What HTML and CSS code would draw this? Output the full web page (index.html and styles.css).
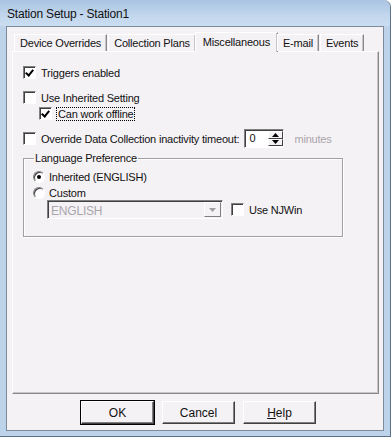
FILE: index.html
```html
<!DOCTYPE html>
<html lang="en">
<head>
  <meta charset="UTF-8" />
  <title>Station Setup - Station1</title>
  <link rel="stylesheet" href="styles.css">
</head>
<body>
  <div class="window">
    <div class="title-bar">Station Setup - Station1</div>
    <div class="client">
      <div class="tabs">
        <div class="tab">Device Overrides</div>
        <div class="tab">Collection Plans</div>
        <div class="tab active">Miscellaneous</div>
        <div class="tab">E-mail</div>
        <div class="tab">Events</div>
      </div>
      <div class="panel">
        <label class="check row-triggers"><span class="box checked"></span>Triggers enabled</label>
        <label class="check row-inherit"><span class="box"></span>Use Inherited Setting</label>
        <label class="check row-offline"><span class="box checked"></span><span class="focus">Can work offline</span></label>
        <div class="timeout-row">
          <label class="check"><span class="box"></span>Override Data Collection inactivity timeout:</label>
          <div class="spinner">
            <span class="spin-value">0</span>
            <span class="spin-buttons">
              <span class="spin-btn"><svg width="7" height="4" viewBox="0 0 7 4"><path d="M3.5 0L7 4H0z" fill="#000"/></svg></span>
              <span class="spin-btn"><svg width="7" height="4" viewBox="0 0 7 4"><path d="M0 0H7L3.5 4z" fill="#000"/></svg></span>
            </span>
          </div>
          <span class="disabled-text">minutes</span>
        </div>
        <fieldset class="group">
          <legend>Language Preference</legend>
          <label class="radio"><span class="dot checked"></span>Inherited (ENGLISH)</label>
          <label class="radio"><span class="dot"></span>Custom</label>
          <div class="combo-row">
            <div class="combo">
              <span class="combo-value">ENGLISH</span>
              <span class="combo-btn"><svg width="7" height="4" viewBox="0 0 7 4"><path d="M0 0H7L3.5 4z" fill="#a0a0a0"/></svg></span>
            </div>
            <label class="check"><span class="box"></span>Use NJWin</label>
          </div>
        </fieldset>
      </div>
      <div class="buttons">
        <button class="btn default">OK</button>
        <button class="btn">Cancel</button>
        <button class="btn"><u>H</u>elp</button>
      </div>
    </div>
  </div>
</body>
</html>
```

FILE: styles.css
```css
body {
  margin: 0;
  padding: 0;
  font-family: "Liberation Sans", Arial, sans-serif;
  font-size: 11px;
  letter-spacing: -0.2px;
  color: #111;
  background: #fff;
}

.window {
  width: 391px;
  height: 437px;
  box-sizing: border-box;
  background: #bcd3ea;
  border: 1px solid #5d7189;
  border-top: none;
  border-left: none;
  border-radius: 0 7px 0 0;
  display: flex;
  flex-direction: column;
  padding: 0 6px 5px 6px;
}

.title-bar {
  height: 26px;
  margin: 0 -6px;
  padding-left: 7px;
  box-sizing: border-box;
  display: flex;
  align-items: center;
  font-size: 12px;
  padding-top: 2px;
  background: linear-gradient(to bottom, #a9c3e1, #c2d7ee 60%, #cadcf0);
  border-radius: 0 7px 0 0;
}

.client {
  flex: 1;
  background: #f5f2f6;
  border: 1px solid #7d8a9a;
  display: flex;
  flex-direction: column;
  padding: 6px 4px 0 5px;
}

.tabs {
  display: flex;
  height: 18px;
  padding-left: 2px;
  align-items: flex-end;
  position: relative;
  z-index: 1;
}

.tab {
  height: 17px;
  box-sizing: border-box;
  padding: 1px 5px 0 5px;
  border: 1px solid #fff;
  border-right-color: #888;
  border-bottom: none;
  margin-right: 1px;
  background: #f5f2f6;
  box-shadow: inset -1px 0 #c8c4c8;
  line-height: 15px;
}

.tab.active {
  height: 20px;
  margin: 0 -1px -1px -2px;
  padding: 1px 7px 0 7px;
  line-height: 16px;
}

.tab.active + .tab {
  margin-left: 0;
}

.panel {
  height: 343px;
  box-sizing: border-box;
  border: 1px solid #fff;
  border-right-color: #888;
  border-bottom-color: #888;
  box-shadow: inset -1px -1px #c8c4c8;
  padding: 15px 0 0 10px;
  display: flex;
  flex-direction: column;
}

.check,
.radio {
  display: flex;
  align-items: center;
  gap: 5px;
  height: 13px;
}

.box {
  width: 13px;
  height: 13px;
  box-sizing: border-box;
  background: #fff;
  border: 1px solid;
  border-color: #808080 #fff #fff #808080;
  box-shadow: inset 1px 1px #404040;
  position: relative;
  flex: none;
}

.box.checked::after {
  content: "";
  position: absolute;
  left: 2px;
  top: 1px;
  width: 3px;
  height: 6px;
  border: solid #000;
  border-width: 0 2px 2px 0;
  transform: translate(1px, 0) rotate(40deg);
}

.row-triggers {
  margin-top: -1px;
}

.row-inherit {
  margin-top: 12px;
}

.row-offline {
  margin: 3px 0 0 16px;
}

.focus {
  outline: 1px dotted #000;
  padding: 0 1px;
}

.timeout-row {
  display: flex;
  align-items: center;
  margin-top: 9px;
  height: 19px;
}

.spinner {
  display: flex;
  width: 40px;
  height: 19px;
  box-sizing: border-box;
  margin-left: 5px;
  background: #fff;
  border: 1px solid;
  border-color: #808080 #fff #fff #808080;
  box-shadow: inset 1px 1px #404040;
}

.spin-value {
  flex: 1;
  padding: 2px 0 0 4px;
  line-height: 13px;
}

.spin-buttons {
  display: flex;
  flex-direction: column;
  width: 15px;
  padding: 1px 0;
}

.spin-btn {
  flex: 1;
  display: flex;
  align-items: center;
  justify-content: center;
  background: #f5f2f6;
  border: 1px solid;
  border-color: #fff #404040 #404040 #fff;
}

.disabled-text {
  color: #a9a6ab;
  margin-left: 10px;
}

.group {
  margin: 4px 0 0 0;
  width: 320px;
  height: 85px;
  box-sizing: border-box;
  border: 1px solid #a0a0a0;
  box-shadow: 1px 1px #fff, inset 1px 1px #fff;
  padding: 6px 0 0 9px;
}

.group legend {
  padding: 0 1px;
  margin-left: 1px;
  line-height: 12px;
}

.radio {
  gap: 4px;
  margin-bottom: 3px;
}

.dot {
  width: 12px;
  height: 12px;
  box-sizing: border-box;
  border-radius: 50%;
  background: #fff;
  border: 1px solid;
  border-color: #808080 #fff #fff #808080;
  box-shadow: inset 1px 1px #404040;
  position: relative;
}

.dot.checked::after {
  content: "";
  position: absolute;
  left: 3px;
  top: 3px;
  width: 4px;
  height: 4px;
  border-radius: 50%;
  background: #000;
}

.combo-row {
  display: flex;
  align-items: center;
  gap: 8px;
  margin: -2px 0 0 14px;
}

.combo {
  display: flex;
  width: 176px;
  height: 19px;
  box-sizing: border-box;
  background: #f5f2f6;
  border: 1px solid;
  border-color: #808080 #fff #fff #808080;
  box-shadow: inset 1px 1px #404040;
  color: #a9a6ab;
}

.combo-value {
  flex: 1;
  padding: 3px 0 0 3px;
  font-size: 12px;
}

.combo-btn {
  width: 15px;
  margin: 1px 1px 1px 0;
  display: flex;
  align-items: center;
  justify-content: center;
  border: 1px solid;
  border-color: #fff #808080 #808080 #fff;
}

.buttons {
  display: flex;
  justify-content: center;
  gap: 8px;
  padding: 7px 0 0 6px;
}

.btn {
  width: 73px;
  height: 23px;
  font: inherit;
  font-size: 12px;
  color: #111;
  background: #f5f2f6;
  border: 1px solid;
  border-color: #fff #404040 #404040 #fff;
  box-shadow: inset -1px -1px #808080;
  padding: 0;
}

.btn.default {
  outline: 1px solid #000;
  outline-offset: 0;
}
```
